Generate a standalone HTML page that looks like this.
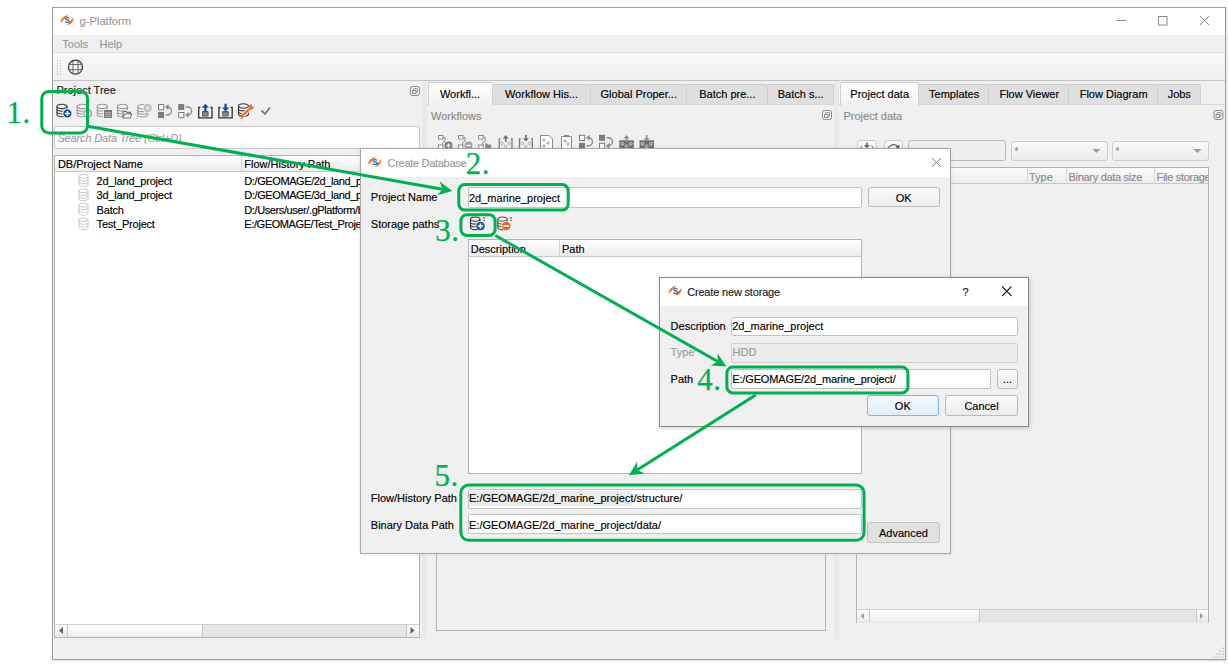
<!DOCTYPE html><html><head><meta charset='utf-8'><style>
*{margin:0;padding:0;box-sizing:border-box}
html,body{width:1228px;height:664px;overflow:hidden;background:#fff;font-family:'Liberation Sans',sans-serif}
.a{position:absolute}
.t{white-space:nowrap;-webkit-text-stroke:0.15px currentColor}
svg{position:absolute;overflow:visible}
</style></head><body>
<div class="a" style="left:52px;top:7px;width:1174px;height:653px;border:1px solid #9d9d9d;background:#f0f0f0;box-shadow:1px 1px 2px rgba(0,0,0,0.15)"></div>
<div class="a" style="left:53px;top:8px;width:1172px;height:27px;background:#fff"></div>
<div class="a" style="left:53px;top:35px;width:1172px;height:17px;background:#f0f0f0"></div>
<div class="a" style="left:53px;top:52px;width:1172px;height:1px;background:#dcdcdc"></div>
<div class="a" style="left:53px;top:53px;width:1172px;height:27px;background:linear-gradient(#f9f9f9,#f0f0f0)"></div>
<div class="a" style="left:53px;top:80px;width:1172px;height:1px;background:#c4c4c4"></div>
<div class="a t" style="left:79.5px;top:15.32px;font-size:11.2px;line-height:13px;color:#999;">g-Platform</div>
<div class="a t" style="left:62.3px;top:37.79px;font-size:11px;line-height:13px;color:#999;">Tools</div>
<div class="a t" style="left:99.5px;top:37.79px;font-size:11px;line-height:13px;color:#999;">Help</div>
<div class="a t" style="left:56.5px;top:84.49px;font-size:11px;line-height:13px;color:#1a1a1a;">Project Tree</div>
<div class="a" style="left:54px;top:126px;width:366px;height:23px;background:#fff;border:1px solid #c9c9c9;border-radius:3px"></div>
<div class="a t" style="left:57.4px;top:131.89px;font-size:11px;line-height:13px;color:#9c9c9c;letter-spacing:-0.15px;font-style:italic">Search Data Tree (Ctrl+D)</div>
<div class="a" style="left:54px;top:155px;width:366px;height:483px;background:#fff;border:1px solid #b4b4b4"></div>
<div class="a" style="left:55px;top:156px;width:364px;height:16px;background:linear-gradient(#ffffff,#ececec);border-bottom:1px solid #c8c8c8"></div>
<div class="a" style="left:241px;top:156px;width:1px;height:16px;background:#d5d5d5"></div>
<div class="a t" style="left:57.9px;top:158.19px;font-size:11px;line-height:13px;color:#000;">DB/Project Name</div>
<div class="a t" style="left:244.3px;top:158.19px;font-size:11px;line-height:13px;color:#000;">Flow/History Path</div>
<div class="a t" style="left:96.6px;top:175.09px;font-size:11px;line-height:13px;color:#000;letter-spacing:-0.2px;">2d_land_project</div>
<div class="a t" style="left:244.3px;top:175.09px;font-size:11px;line-height:13px;color:#000;letter-spacing:-0.4px;">D:/GEOMAGE/2d_land_project</div>
<div class="a t" style="left:96.6px;top:189.49px;font-size:11px;line-height:13px;color:#000;letter-spacing:-0.2px;">3d_land_project</div>
<div class="a t" style="left:244.3px;top:189.49px;font-size:11px;line-height:13px;color:#000;letter-spacing:-0.4px;">D:/GEOMAGE/3d_land_project</div>
<div class="a t" style="left:96.6px;top:203.89px;font-size:11px;line-height:13px;color:#000;letter-spacing:-0.2px;">Batch</div>
<div class="a t" style="left:244.3px;top:203.89px;font-size:11px;line-height:13px;color:#000;letter-spacing:-0.4px;">D:/Users/user/.gPlatform/batch</div>
<div class="a t" style="left:96.6px;top:218.29px;font-size:11px;line-height:13px;color:#000;letter-spacing:-0.2px;">Test_Project</div>
<div class="a t" style="left:244.3px;top:218.29px;font-size:11px;line-height:13px;color:#000;letter-spacing:-0.4px;">E:/GEOMAGE/Test_Project</div>
<div class="a" style="left:55px;top:624px;width:364px;height:13px;background:#e6e6e6;border-top:1px solid #d0d0d0"></div>
<div class="a" style="left:55px;top:625px;width:13px;height:12px;background:linear-gradient(#fdfdfd,#eaeaea);border-right:1px solid #c8c8c8"></div>
<div class="a" style="left:68px;top:625px;width:135px;height:12px;background:linear-gradient(#ffffff,#ececec);border-right:1px solid #c8c8c8"></div>
<div class="a" style="left:406px;top:625px;width:13px;height:12px;background:linear-gradient(#fdfdfd,#eaeaea);border-left:1px solid #c8c8c8"></div>
<div class="a" style="left:422px;top:81px;width:5px;height:558px;background:#e9e9e9"></div>
<div class="a" style="left:834px;top:81px;width:5px;height:558px;background:#e9e9e9"></div>
<div class="a" style="left:427px;top:104px;width:407px;height:1px;background:#d9d9d9"></div>
<div class="a" style="left:427.5px;top:82px;width:65.0px;height:23.5px;background:linear-gradient(#ffffff,#f0f0f0);border:1px solid #d0d0d0;border-bottom:none;border-radius:2px 2px 0 0"></div>
<div class="a t" style="left:0px;top:87.79px;font-size:11px;line-height:13px;color:#000;left:427.5px;width:65.0px;text-align:center;">Workfl...</div>
<div class="a" style="left:492.5px;top:84.3px;width:98.0px;height:20.200000000000003px;background:#dfdfdf;border:1px solid #cfcfcf;border-bottom:none;border-left:none;border-radius:0 2px 0 0"></div>
<div class="a t" style="left:0px;top:87.79px;font-size:11px;line-height:13px;color:#000;left:492.5px;width:98.0px;text-align:center;">Workflow His...</div>
<div class="a" style="left:590.5px;top:84.3px;width:96.5px;height:20.200000000000003px;background:#dfdfdf;border:1px solid #cfcfcf;border-bottom:none;border-left:none;border-radius:0 2px 0 0"></div>
<div class="a t" style="left:0px;top:87.79px;font-size:11px;line-height:13px;color:#000;left:590.5px;width:96.5px;text-align:center;">Global Proper...</div>
<div class="a" style="left:687px;top:84.3px;width:80.70000000000005px;height:20.200000000000003px;background:#dfdfdf;border:1px solid #cfcfcf;border-bottom:none;border-left:none;border-radius:0 2px 0 0"></div>
<div class="a t" style="left:0px;top:87.79px;font-size:11px;line-height:13px;color:#000;left:687px;width:80.70000000000005px;text-align:center;">Batch pre...</div>
<div class="a" style="left:767.7px;top:84.3px;width:65.89999999999998px;height:20.200000000000003px;background:#dfdfdf;border:1px solid #cfcfcf;border-bottom:none;border-left:none;border-radius:0 2px 0 0"></div>
<div class="a t" style="left:0px;top:87.79px;font-size:11px;line-height:13px;color:#000;left:767.7px;width:65.89999999999998px;text-align:center;">Batch s...</div>
<div class="a t" style="left:431px;top:109.59px;font-size:11px;line-height:13px;color:#8a8a8a;">Workflows</div>
<div class="a" style="left:436px;top:160px;width:390px;height:471px;border:1px solid #b4b4b4;background:#f0f0f0"></div>
<div class="a" style="left:839px;top:104px;width:386px;height:1px;background:#d9d9d9"></div>
<div class="a" style="left:840.4px;top:82px;width:78.60000000000002px;height:23.5px;background:linear-gradient(#ffffff,#f0f0f0);border:1px solid #d0d0d0;border-bottom:none;border-radius:2px 2px 0 0"></div>
<div class="a t" style="left:0px;top:87.79px;font-size:11px;line-height:13px;color:#000;left:840.4px;width:78.60000000000002px;text-align:center;">Project data</div>
<div class="a" style="left:919px;top:84.3px;width:70.29999999999995px;height:20.200000000000003px;background:#dfdfdf;border:1px solid #cfcfcf;border-bottom:none;border-left:none;border-radius:0 2px 0 0"></div>
<div class="a t" style="left:0px;top:87.79px;font-size:11px;line-height:13px;color:#000;left:919px;width:70.29999999999995px;text-align:center;">Templates</div>
<div class="a" style="left:989.3px;top:84.3px;width:80.0px;height:20.200000000000003px;background:#dfdfdf;border:1px solid #cfcfcf;border-bottom:none;border-left:none;border-radius:0 2px 0 0"></div>
<div class="a t" style="left:0px;top:87.79px;font-size:11px;line-height:13px;color:#000;left:989.3px;width:80.0px;text-align:center;">Flow Viewer</div>
<div class="a" style="left:1069.3px;top:84.3px;width:88.70000000000005px;height:20.200000000000003px;background:#dfdfdf;border:1px solid #cfcfcf;border-bottom:none;border-left:none;border-radius:0 2px 0 0"></div>
<div class="a t" style="left:0px;top:87.79px;font-size:11px;line-height:13px;color:#000;left:1069.3px;width:88.70000000000005px;text-align:center;">Flow Diagram</div>
<div class="a" style="left:1158px;top:84.3px;width:42.5px;height:20.200000000000003px;background:#dfdfdf;border:1px solid #cfcfcf;border-bottom:none;border-left:none;border-radius:0 2px 0 0"></div>
<div class="a t" style="left:0px;top:87.79px;font-size:11px;line-height:13px;color:#000;left:1158px;width:42.5px;text-align:center;">Jobs</div>
<div class="a t" style="left:843.5px;top:109.79px;font-size:11px;line-height:13px;color:#8a8a8a;">Project data</div>
<div class="a" style="left:857px;top:140px;width:20px;height:21px;border:1px solid #c8c8c8;border-radius:3px;background:linear-gradient(#fafafa,#ececec)"></div>
<div class="a" style="left:883.5px;top:140px;width:19.0px;height:21px;border:1px solid #c8c8c8;border-radius:3px;background:linear-gradient(#fafafa,#ececec)"></div>
<div class="a" style="left:907.5px;top:140px;width:98.0px;height:20.5px;border:1px solid #b9b9b9;border-radius:3px;background:#efefef"></div>
<div class="a" style="left:1011px;top:140.5px;width:96.5px;height:20.0px;border:1px solid #cdcdcd;border-radius:3px;background:linear-gradient(#f9f9f9,#ececec)"></div>
<div class="a t" style="left:1014.5px;top:146.03px;font-size:10px;line-height:12px;color:#8a8a8a;">*</div>
<div class="a" style="left:1112px;top:140.5px;width:96.5px;height:20.0px;border:1px solid #cdcdcd;border-radius:3px;background:linear-gradient(#f9f9f9,#ececec)"></div>
<div class="a t" style="left:1115.5px;top:146.03px;font-size:10px;line-height:12px;color:#8a8a8a;">*</div>
<div class="a" style="left:856px;top:167px;width:353px;height:456px;border:1px solid #b4b4b4;background:#f0f0f0"></div>
<div class="a" style="left:857px;top:168px;width:351px;height:16px;background:linear-gradient(#fbfbfb,#ececec);border-bottom:1px solid #c8c8c8"></div>
<div class="a" style="left:1026.5px;top:168px;width:1.0px;height:16px;background:#d5d5d5"></div>
<div class="a" style="left:1065.5px;top:168px;width:1.0px;height:16px;background:#d5d5d5"></div>
<div class="a" style="left:1153.5px;top:168px;width:1.0px;height:16px;background:#d5d5d5"></div>
<div class="a t" style="left:1029px;top:170.69px;font-size:11px;line-height:13px;color:#8a8a8a;">Type</div>
<div class="a t" style="left:1068.5px;top:170.69px;font-size:11px;line-height:13px;color:#8a8a8a;letter-spacing:-0.3px;">Binary data size</div>
<div class="a t" style="left:1156.5px;top:170.69px;font-size:11px;line-height:13px;color:#8a8a8a;width:51.5px;overflow:hidden;letter-spacing:-0.3px;">File storage</div>
<div class="a" style="left:857px;top:609px;width:351px;height:14px;background:#e6e6e6;border-top:1px solid #d0d0d0"></div>
<div class="a" style="left:857px;top:610px;width:13px;height:12px;background:linear-gradient(#fdfdfd,#eaeaea);border-right:1px solid #c8c8c8"></div>
<div class="a" style="left:870px;top:610px;width:109.5px;height:12px;background:linear-gradient(#ffffff,#ececec);border-right:1px solid #c8c8c8"></div>
<div class="a" style="left:1195.5px;top:610px;width:12.5px;height:12px;background:linear-gradient(#fdfdfd,#eaeaea);border-left:1px solid #c8c8c8"></div>
<svg class="a" style="left:0;top:0" width="1228" height="664" viewBox="0 0 1228 664"><path d="M1116.5 20.5H1126" stroke="#888" stroke-width="1"/><rect x="1158.5" y="16.5" width="8.5" height="8.5" fill="none" stroke="#888" stroke-width="1"/><path d="M1200 16L1209 25M1209 16L1200 25" stroke="#888" stroke-width="1"/><g transform="translate(60.8,15.4) scale(1.0)"><path d="M0 7.2Q0.3 1.2 7.1 0.2Q3.5 3 0 7.2Z" fill="#f26a1b" stroke="#f26a1b" stroke-width="0.5"/><path d="M12.4 2.6Q12.3 8.6 6.6 9.3Q9.6 6.2 12.4 2.6Z" fill="#f26a1b" stroke="#f26a1b" stroke-width="0.5"/><text x="3.7" y="7.9" font-family="Liberation Sans" font-weight="bold" font-size="10" fill="#1e6ab4" transform="scale(1,1.1)" style="transform-origin:0 7.9px">s</text></g><circle cx="75.5" cy="67.2" r="7" fill="none" stroke="#3a3a3a" stroke-width="1.3"/><path d="M69 64.5H82M69 69.7H82M73 60.8V73.6M78 60.8V73.6" stroke="#5a5a5a" stroke-width="0.9"/><rect x="57.0" y="60.0" width="1" height="1" fill="#b0b0b0"/><rect x="57.0" y="62.8" width="1" height="1" fill="#b0b0b0"/><rect x="57.0" y="65.6" width="1" height="1" fill="#b0b0b0"/><rect x="57.0" y="68.4" width="1" height="1" fill="#b0b0b0"/><rect x="57.0" y="71.2" width="1" height="1" fill="#b0b0b0"/><rect x="57.0" y="74.0" width="1" height="1" fill="#b0b0b0"/><rect x="60.0" y="60.0" width="1" height="1" fill="#b0b0b0"/><rect x="60.0" y="62.8" width="1" height="1" fill="#b0b0b0"/><rect x="60.0" y="65.6" width="1" height="1" fill="#b0b0b0"/><rect x="60.0" y="68.4" width="1" height="1" fill="#b0b0b0"/><rect x="60.0" y="71.2" width="1" height="1" fill="#b0b0b0"/><rect x="60.0" y="74.0" width="1" height="1" fill="#b0b0b0"/><rect x="410.5" y="86.5" width="9" height="9" rx="2" fill="none" stroke="#8c8c8c" stroke-width="1"/><rect x="413.5" y="88.5" width="4" height="4" rx="1" fill="none" stroke="#8c8c8c" stroke-width="1"/><rect x="412.5" y="90.5" width="3.5" height="3" fill="#f0f0f0" stroke="#8c8c8c" stroke-width="1"/><rect x="822.5" y="110.5" width="9" height="9" rx="2" fill="none" stroke="#8c8c8c" stroke-width="1"/><rect x="825.5" y="112.5" width="4" height="4" rx="1" fill="none" stroke="#8c8c8c" stroke-width="1"/><rect x="824.5" y="114.5" width="3.5" height="3" fill="#f0f0f0" stroke="#8c8c8c" stroke-width="1"/><rect x="1214.0" y="110.5" width="9" height="9" rx="2" fill="none" stroke="#8c8c8c" stroke-width="1"/><rect x="1217.0" y="112.5" width="4" height="4" rx="1" fill="none" stroke="#8c8c8c" stroke-width="1"/><rect x="1216.0" y="114.5" width="3.5" height="3" fill="#f0f0f0" stroke="#8c8c8c" stroke-width="1"/><g transform="translate(78.5,173.9)" fill="none" stroke="#c8c8c8" stroke-width="1"><ellipse cx="5" cy="2.5" rx="4.5" ry="2"/><path d="M0.5 2.5V10.5C0.5 11.6 2.5 12.5 5 12.5S9.5 11.6 9.5 10.5V2.5"/><path d="M0.5 5.2C0.5 6.3 2.5 7.2 5 7.2S9.5 6.3 9.5 5.2M0.5 7.9C0.5 9 2.5 9.9 5 9.9S9.5 9 9.5 7.9"/></g><g transform="translate(78.5,188.3)" fill="none" stroke="#c8c8c8" stroke-width="1"><ellipse cx="5" cy="2.5" rx="4.5" ry="2"/><path d="M0.5 2.5V10.5C0.5 11.6 2.5 12.5 5 12.5S9.5 11.6 9.5 10.5V2.5"/><path d="M0.5 5.2C0.5 6.3 2.5 7.2 5 7.2S9.5 6.3 9.5 5.2M0.5 7.9C0.5 9 2.5 9.9 5 9.9S9.5 9 9.5 7.9"/></g><g transform="translate(78.5,202.70000000000002)" fill="none" stroke="#c8c8c8" stroke-width="1"><ellipse cx="5" cy="2.5" rx="4.5" ry="2"/><path d="M0.5 2.5V10.5C0.5 11.6 2.5 12.5 5 12.5S9.5 11.6 9.5 10.5V2.5"/><path d="M0.5 5.2C0.5 6.3 2.5 7.2 5 7.2S9.5 6.3 9.5 5.2M0.5 7.9C0.5 9 2.5 9.9 5 9.9S9.5 9 9.5 7.9"/></g><g transform="translate(78.5,217.10000000000002)" fill="none" stroke="#c8c8c8" stroke-width="1"><ellipse cx="5" cy="2.5" rx="4.5" ry="2"/><path d="M0.5 2.5V10.5C0.5 11.6 2.5 12.5 5 12.5S9.5 11.6 9.5 10.5V2.5"/><path d="M0.5 5.2C0.5 6.3 2.5 7.2 5 7.2S9.5 6.3 9.5 5.2M0.5 7.9C0.5 9 2.5 9.9 5 9.9S9.5 9 9.5 7.9"/></g><path d="M59 630.5L63 627V634Z" fill="#606060"/><path d="M414.5 630.5L410.5 627V634Z" fill="#606060"/><path d="M1092.5 149H1100.5L1096.5 153Z" fill="#9a9a9a"/><path d="M1193.5 149H1201.5L1197.5 153Z" fill="#9a9a9a"/><path d="M860.5 616L864 613V619Z" fill="#a0a0a0"/><path d="M1203.5 616L1200 613V619Z" fill="#a0a0a0"/><rect x="1222.5" y="647.5" width="1.5" height="1.5" fill="#c4c4c4"/><rect x="1219.5" y="650.5" width="1.5" height="1.5" fill="#c4c4c4"/><rect x="1222.5" y="650.5" width="1.5" height="1.5" fill="#c4c4c4"/><rect x="1216.5" y="653.5" width="1.5" height="1.5" fill="#c4c4c4"/><rect x="1219.5" y="653.5" width="1.5" height="1.5" fill="#c4c4c4"/><rect x="1222.5" y="653.5" width="1.5" height="1.5" fill="#c4c4c4"/><rect x="1213.5" y="656.5" width="1.5" height="1.5" fill="#c4c4c4"/><rect x="1216.5" y="656.5" width="1.5" height="1.5" fill="#c4c4c4"/><rect x="1219.5" y="656.5" width="1.5" height="1.5" fill="#c4c4c4"/><rect x="1222.5" y="656.5" width="1.5" height="1.5" fill="#c4c4c4"/><g transform="translate(56.5,103.7)" fill="none" stroke="#3a3a3a" stroke-width="1.1"><ellipse cx="5.5" cy="2.7" rx="5" ry="2.2"/><path d="M0.5 2.7V10.8C0.5 12.0 2.7 13.0 5.5 13.0S10.5 12.0 10.5 10.8V2.7"/><path d="M0.5 5.40C0.5 6.60 2.7 7.60 5.5 7.60S10.5 6.60 10.5 5.40"/><path d="M0.5 8.10C0.5 9.30 2.7 10.30 5.5 10.30S10.5 9.30 10.5 8.10"/></g><circle cx="67.4" cy="113.5" r="5" fill="#f0f0f0"/><circle cx="67.4" cy="113.5" r="4.4" fill="#0d4aa0" stroke="#fff" stroke-width="0.6"/><path d="M64.80000000000001 113.5H70.0M67.4 110.9V116.1" stroke="#fff" stroke-width="1.6"/><g transform="translate(76.7,103.7)" fill="none" stroke="#9a9a9a" stroke-width="1.1"><ellipse cx="5.5" cy="2.7" rx="5" ry="2.2"/><path d="M0.5 2.7V10.8C0.5 12.0 2.7 13.0 5.5 13.0S10.5 12.0 10.5 10.8V2.7"/><path d="M0.5 5.40C0.5 6.60 2.7 7.60 5.5 7.60S10.5 6.60 10.5 5.40"/><path d="M0.5 8.10C0.5 9.30 2.7 10.30 5.5 10.30S10.5 9.30 10.5 8.10"/></g><circle cx="87.7" cy="113.5" r="5" fill="#f0f0f0"/><circle cx="87.7" cy="113.5" r="3.8" fill="none" stroke="#a0a0a0" stroke-width="1.4"/><g transform="translate(96.8,103.7)" fill="none" stroke="#9a9a9a" stroke-width="1.1"><ellipse cx="5.5" cy="2.7" rx="5" ry="2.2"/><path d="M0.5 2.7V10.8C0.5 12.0 2.7 13.0 5.5 13.0S10.5 12.0 10.5 10.8V2.7"/><path d="M0.5 5.40C0.5 6.60 2.7 7.60 5.5 7.60S10.5 6.60 10.5 5.40"/><path d="M0.5 8.10C0.5 9.30 2.7 10.30 5.5 10.30S10.5 9.30 10.5 8.10"/></g><rect x="103" y="109" width="10" height="10" fill="#f0f0f0"/><rect x="104" y="110" width="8" height="8" fill="#7a7a7a"/><path d="M105 112.5H111M105 114.5H111M105 116.5H111" stroke="#c8c8c8" stroke-width="0.7"/><g transform="translate(117,103.7)" fill="none" stroke="#9a9a9a" stroke-width="1.1"><ellipse cx="5.5" cy="2.7" rx="5" ry="2.2"/><path d="M0.5 2.7V10.8C0.5 12.0 2.7 13.0 5.5 13.0S10.5 12.0 10.5 10.8V2.7"/><path d="M0.5 5.40C0.5 6.60 2.7 7.60 5.5 7.60S10.5 6.60 10.5 5.40"/><path d="M0.5 8.10C0.5 9.30 2.7 10.30 5.5 10.30S10.5 9.30 10.5 8.10"/></g><rect x="122" y="110" width="11" height="9" fill="#f0f0f0"/><path d="M123 118V111.3H126L127 112.3H130.5V114" fill="none" stroke="#6a6a6a" stroke-width="1.2"/><path d="M123 118L124.6 114H131.8L130.4 118Z" fill="#fff" stroke="#6a6a6a" stroke-width="1"/><g transform="translate(137.2,104)" fill="none" stroke="#a0a0a0" stroke-width="1.1"><ellipse cx="5.5" cy="2.7" rx="5" ry="2.2"/><path d="M0.5 2.7V10.8C0.5 12.0 2.7 13.0 5.5 13.0S10.5 12.0 10.5 10.8V2.7"/><path d="M0.5 5.40C0.5 6.60 2.7 7.60 5.5 7.60S10.5 6.60 10.5 5.40"/><path d="M0.5 8.10C0.5 9.30 2.7 10.30 5.5 10.30S10.5 9.30 10.5 8.10"/></g><circle cx="147.7" cy="108" r="5" fill="#f0f0f0"/><circle cx="147.7" cy="108" r="4.2" fill="#bdbdbd"/><path d="M146 106.3L149.4 109.7M149.4 106.3L146 109.7" stroke="#f0f0f0" stroke-width="1.1"/><rect x="158.5" y="104.5" width="5.2" height="5.2" fill="#fff" stroke="#7c7c7c" stroke-width="1"/><rect x="158" y="112" width="6" height="6" fill="#7c7c7c"/><path d="M165.5 115H167.5A4 4 0 0 0 167.5 107H167" fill="none" stroke="#8a8a8a" stroke-width="1.4"/><path d="M165 107L168.5 104V110Z" fill="#8a8a8a"/><rect x="178.2" y="104" width="6" height="6" fill="#7c7c7c"/><rect x="178.7" y="112.5" width="5.2" height="5.2" fill="#fff" stroke="#7c7c7c" stroke-width="1"/><path d="M185.7 107H187.7A4 4 0 0 1 187.7 115H187.2" fill="none" stroke="#8a8a8a" stroke-width="1.4"/><path d="M185.2 115L188.7 112V118Z" fill="#8a8a8a"/><path d="M200.3 107.5H198.7V117.8H212V107.5H210.4" fill="none" stroke="#2e2e2e" stroke-width="1.3"/><rect x="202" y="111.0" width="6.6" height="5.6" rx="1.2" fill="#5a5a5a"/><path d="M203 113.1H207.6M203 114.8H207.6" stroke="#c8c8c8" stroke-width="0.7"/><path d="M205.35 111.5V106.3" stroke="#0d4aa0" stroke-width="2.2"/><path d="M201.8 107.7L205.35 103.7L208.9 107.7Z" fill="#0d4aa0"/><path d="M220.5 107.5H218.89999999999998V117.8H232.2V107.5H230.6" fill="none" stroke="#2e2e2e" stroke-width="1.3"/><rect x="222.2" y="111.0" width="6.6" height="5.6" rx="1.2" fill="#5a5a5a"/><path d="M223.2 113.1H227.79999999999998M223.2 114.8H227.79999999999998" stroke="#c8c8c8" stroke-width="0.7"/><path d="M225.54999999999998 103.7V108.5" stroke="#0d4aa0" stroke-width="2.2"/><path d="M222.0 107.5L225.54999999999998 111.5L229.1 107.5Z" fill="#0d4aa0"/><g transform="translate(238,103.3)" fill="none" stroke="#3a3a3a" stroke-width="1.1"><ellipse cx="5.5" cy="2.7" rx="5" ry="2.2"/><path d="M0.5 2.7V10.8C0.5 12.0 2.7 13.0 5.5 13.0S10.5 12.0 10.5 10.8V2.7"/><path d="M0.5 5.40C0.5 6.60 2.7 7.60 5.5 7.60S10.5 6.60 10.5 5.40"/><path d="M0.5 8.10C0.5 9.30 2.7 10.30 5.5 10.30S10.5 9.30 10.5 8.10"/></g><path d="M242 116.2L251 107.5" stroke="#f0f0f0" stroke-width="4"/><path d="M242 116.2L251 107.5" stroke="#ec6a1a" stroke-width="2.2"/><circle cx="251.5" cy="107" r="2.4" fill="#ec6a1a"/><circle cx="252.8" cy="105.7" r="1" fill="#f0f0f0"/><circle cx="241.5" cy="116.7" r="2" fill="#ec6a1a"/><circle cx="240.5" cy="117.6" r="0.8" fill="#f0f0f0"/><path d="M261.5 110.5L265 114L270 107.5" fill="none" stroke="#787878" stroke-width="1.8"/><rect x="438.5" y="135.5" width="4.5" height="3.5" fill="#fff" stroke="#8a8a8a" stroke-width="1"/><path d="M443 137.3H445V141L442.5 143V145" fill="none" stroke="#8a8a8a" stroke-width="1"/><rect x="438.5" y="145" width="4.5" height="3.5" fill="#fff" stroke="#8a8a8a" stroke-width="1"/><circle cx="448.5" cy="145.5" r="4" fill="#7a7a7a"/><path d="M446.5 145.5H450.5M448.5 143.5V147.5" stroke="#fff" stroke-width="1.3"/><rect x="458.5" y="135.5" width="4.5" height="3.5" fill="#fff" stroke="#8a8a8a" stroke-width="1"/><path d="M463 137.3H465V141L462.5 143V145" fill="none" stroke="#8a8a8a" stroke-width="1"/><rect x="458.5" y="145" width="4.5" height="3.5" fill="#fff" stroke="#8a8a8a" stroke-width="1"/><circle cx="468.5" cy="145.5" r="4" fill="#a0a0a0"/><path d="M466.3 145.5H470.7" stroke="#fff" stroke-width="1.3"/><rect x="478.7" y="135.5" width="4.5" height="3.5" fill="#fff" stroke="#8a8a8a" stroke-width="1"/><path d="M483.2 137.3H485.2V141L482.7 143V145" fill="none" stroke="#8a8a8a" stroke-width="1"/><rect x="478.7" y="145" width="4.5" height="3.5" fill="#fff" stroke="#8a8a8a" stroke-width="1"/><path d="M485.2 149V143.5H487.2L488.2 144.5H491.2V149Z" fill="#8a8a8a"/><path d="M500.5 138.8H499.2V149.8H512.0V138.8H510.7" fill="none" stroke="#7a7a7a" stroke-width="1.3"/><circle cx="502.0" cy="143.3" r="1.3" fill="none" stroke="#a8a8a8" stroke-width="0.9"/><circle cx="505.5" cy="146.3" r="1.3" fill="none" stroke="#a8a8a8" stroke-width="0.9"/><circle cx="509.3" cy="143.3" r="1.3" fill="none" stroke="#a8a8a8" stroke-width="0.9"/><path d="M505.7 141.8V137.3" stroke="#6e6e6e" stroke-width="1.7"/><path d="M502.7 138.4L505.7 135.0L508.7 138.4Z" fill="#6e6e6e"/><path d="M520.8 138.8H519.5V149.8H532.3V138.8H531.0" fill="none" stroke="#7a7a7a" stroke-width="1.3"/><circle cx="522.3" cy="143.3" r="1.3" fill="none" stroke="#a8a8a8" stroke-width="0.9"/><circle cx="525.8" cy="146.3" r="1.3" fill="none" stroke="#a8a8a8" stroke-width="0.9"/><circle cx="529.5999999999999" cy="143.3" r="1.3" fill="none" stroke="#a8a8a8" stroke-width="0.9"/><path d="M526.0 135.0V138.8" stroke="#6e6e6e" stroke-width="1.7"/><path d="M523.0 138.3L526.0 141.60000000000002L529.0 138.3Z" fill="#6e6e6e"/><path d="M540.5 135.5H549L552.5 139V150H540.5Z" fill="#fff" stroke="#8a8a8a" stroke-width="1"/><circle cx="544" cy="140" r="1.2" fill="none" stroke="#8a8a8a" stroke-width="0.8"/><circle cx="548" cy="143" r="1.2" fill="none" stroke="#8a8a8a" stroke-width="0.8"/><circle cx="544" cy="146" r="1.2" fill="none" stroke="#8a8a8a" stroke-width="0.8"/><path d="M561.5 136.5H571.5V150H561.5Z" fill="#fff" stroke="#8a8a8a" stroke-width="1"/><rect x="564" y="135" width="5" height="2.2" fill="#8a8a8a"/><circle cx="565" cy="141" r="1.2" fill="none" stroke="#8a8a8a" stroke-width="0.8"/><circle cx="568" cy="144" r="1.2" fill="none" stroke="#8a8a8a" stroke-width="0.8"/><rect x="579.5" y="135.3" width="5.2" height="5.2" fill="#fff" stroke="#7c7c7c" stroke-width="1"/><rect x="579" y="142.8" width="6" height="6" fill="#7c7c7c"/><path d="M586.5 145.8H588.5A4 4 0 0 0 588.5 137.8H588" fill="none" stroke="#8a8a8a" stroke-width="1.4"/><path d="M586 137.8L589.5 134.8V140.8Z" fill="#8a8a8a"/><rect x="599" y="134.8" width="6" height="6" fill="#7c7c7c"/><rect x="599.5" y="143.3" width="5.2" height="5.2" fill="#fff" stroke="#7c7c7c" stroke-width="1"/><path d="M606.5 137.8H608.5A4 4 0 0 1 608.5 145.8H608" fill="none" stroke="#8a8a8a" stroke-width="1.4"/><path d="M606 145.8L609.5 142.8V148.8Z" fill="#8a8a8a"/><rect x="619.3" y="140.3" width="14.5" height="9" fill="#707070"/><circle cx="622.3" cy="143.8" r="1.4" fill="none" stroke="#d8d8d8" stroke-width="0.9"/><circle cx="626.5" cy="146.3" r="1.4" fill="none" stroke="#d8d8d8" stroke-width="0.9"/><circle cx="630.8" cy="143.8" r="1.4" fill="none" stroke="#d8d8d8" stroke-width="0.9"/><path d="M626.5 141.8V137.3" stroke="#8c8c8c" stroke-width="1.7"/><path d="M623.5 138.4L626.5 135.0L629.5 138.4Z" fill="#8c8c8c"/><rect x="639.5" y="140.3" width="14.5" height="9" fill="#707070"/><circle cx="642.5" cy="143.8" r="1.4" fill="none" stroke="#d8d8d8" stroke-width="0.9"/><circle cx="646.7" cy="146.3" r="1.4" fill="none" stroke="#d8d8d8" stroke-width="0.9"/><circle cx="651.0" cy="143.8" r="1.4" fill="none" stroke="#d8d8d8" stroke-width="0.9"/><path d="M646.7 135.0V138.8" stroke="#8c8c8c" stroke-width="1.7"/><path d="M643.7 138.3L646.7 141.60000000000002L649.7 138.3Z" fill="#8c8c8c"/><path d="M866.8 142.5V147" stroke="#6a6a6a" stroke-width="1.7"/><path d="M863.8 145L866.8 148.5L869.8 145Z" fill="#6a6a6a"/><path d="M862 145.5L860.5 148.5M871.5 145.5L873.5 148.5" stroke="#8a8a8a" stroke-width="1.1"/><path d="M887.5 148.5Q893 141.5 898.5 147" fill="none" stroke="#5a5a5a" stroke-width="1.2"/><path d="M895.5 147.3L899.5 144.8L899.3 149Z" fill="#5a5a5a"/></svg>
<div class="a" style="left:360px;top:148px;width:591px;height:406px;border:1px solid #a8a8a8;background:#f0f0f0;box-shadow:0 0 3px rgba(0,0,0,0.12)"></div>
<div class="a" style="left:361px;top:149px;width:589px;height:28px;background:#fff"></div>
<div class="a t" style="left:387.6px;top:157.39px;font-size:11px;line-height:13px;color:#999;letter-spacing:-0.3px;">Create Database</div>
<div class="a t" style="left:370.8px;top:191.39px;font-size:11px;line-height:13px;color:#000;">Project Name</div>
<div class="a" style="left:467.5px;top:187px;width:394.0px;height:21px;background:#fff;border:1px solid #c3c3c3;border-radius:2px"></div>
<div class="a t" style="left:469px;top:191.79px;font-size:11px;line-height:13px;color:#000;">2d_marine_project</div>
<div class="a" style="left:867.5px;top:187.3px;width:72.5px;height:20.19999999999999px;background:linear-gradient(#fbfbfb,#ececec);border:1px solid #bababa;border-radius:3px"></div>
<div class="a t" style="left:0px;top:191.59px;font-size:11px;line-height:13px;color:#000;left:867.5px;width:72.5px;text-align:center;">OK</div>
<div class="a t" style="left:370.8px;top:217.89px;font-size:11px;line-height:13px;color:#000;">Storage paths</div>
<div class="a" style="left:467.5px;top:239px;width:394.5px;height:235px;background:#fff;border:1px solid #b4b4b4"></div>
<div class="a" style="left:468.5px;top:240px;width:392.5px;height:16.5px;background:linear-gradient(#ffffff,#ececec);border-bottom:1px solid #c8c8c8"></div>
<div class="a" style="left:559px;top:240px;width:1px;height:16px;background:#d5d5d5"></div>
<div class="a t" style="left:470.8px;top:242.59px;font-size:11px;line-height:13px;color:#000;">Description</div>
<div class="a t" style="left:562px;top:242.59px;font-size:11px;line-height:13px;color:#000;">Path</div>
<div class="a t" style="left:370.8px;top:492.29px;font-size:11px;line-height:13px;color:#000;">Flow/History Path</div>
<div class="a" style="left:467.5px;top:488.5px;width:394.0px;height:20.0px;background:#fff;border:1px solid #c3c3c3;border-radius:2px"></div>
<div class="a" style="left:469px;top:491px;width:163px;height:15px;background:#ebebeb"></div>
<div class="a t" style="left:469px;top:492.49px;font-size:11px;line-height:13px;color:#000;">E:/GEOMAGE/2d_marine_project/structure/</div>
<div class="a t" style="left:370.8px;top:518.69px;font-size:11px;line-height:13px;color:#000;">Binary Data Path</div>
<div class="a" style="left:467.5px;top:514.3px;width:394.0px;height:20.0px;background:#fff;border:1px solid #c3c3c3;border-radius:2px"></div>
<div class="a t" style="left:469px;top:518.89px;font-size:11px;line-height:13px;color:#000;">E:/GEOMAGE/2d_marine_project/data/</div>
<div class="a" style="left:867.2px;top:522.2px;width:72.59999999999991px;height:20.59999999999991px;background:#e1e1e1;border:1px solid #c2c2c2;border-radius:3px"></div>
<div class="a t" style="left:0px;top:526.69px;font-size:11px;line-height:13px;color:#000;left:867.2px;width:72.59999999999991px;text-align:center;">Advanced</div>
<svg class="a" style="left:0;top:0" width="1228" height="664" viewBox="0 0 1228 664"><g transform="translate(368.5,157.2) scale(1.0)"><path d="M0 7.2Q0.3 1.2 7.1 0.2Q3.5 3 0 7.2Z" fill="#f26a1b" stroke="#f26a1b" stroke-width="0.5"/><path d="M12.4 2.6Q12.3 8.6 6.6 9.3Q9.6 6.2 12.4 2.6Z" fill="#f26a1b" stroke="#f26a1b" stroke-width="0.5"/><text x="3.7" y="7.9" font-family="Liberation Sans" font-weight="bold" font-size="10" fill="#1e6ab4" transform="scale(1,1.1)" style="transform-origin:0 7.9px">s</text></g><path d="M932 158L941 167M941 158L932 167" stroke="#888" stroke-width="1"/><g transform="translate(470,216.5)" fill="none" stroke="#3c3c3c" stroke-width="1.1"><ellipse cx="5.2" cy="2.6" rx="4.7" ry="2.1"/><path d="M0.5 2.6V11C0.5 12.2 2.6 13.1 5.2 13.1S9.9 12.2 9.9 11V2.6"/><path d="M0.5 5.4C0.5 6.6 2.6 7.5 5.2 7.5S9.9 6.6 9.9 5.4M0.5 8.2C0.5 9.4 2.6 10.3 5.2 10.3S9.9 9.4 9.9 8.2"/></g><path d="M482.5 218H485M483.5 220.5H485" stroke="#444" stroke-width="1"/><circle cx="480.5" cy="226" r="4.6" fill="#1a4fa0" stroke="#fff" stroke-width="0.6"/><path d="M477.9 226H483.1M480.5 223.4V228.6" stroke="#fff" stroke-width="1.6"/><g transform="translate(497.3,216.5)" fill="none" stroke="#555" stroke-width="1.1"><ellipse cx="5.2" cy="2.6" rx="4.7" ry="2.1"/><path d="M0.5 2.6V11C0.5 12.2 2.6 13.1 5.2 13.1S9.9 12.2 9.9 11V2.6"/><path d="M0.5 5.4C0.5 6.6 2.6 7.5 5.2 7.5S9.9 6.6 9.9 5.4M0.5 8.2C0.5 9.4 2.6 10.3 5.2 10.3S9.9 9.4 9.9 8.2"/></g><path d="M509.5 218H512M510.5 220.5H512" stroke="#444" stroke-width="1"/><circle cx="506.2" cy="226" r="4.6" fill="#e8661c" stroke="#fff" stroke-width="0.6"/><path d="M503.4 226H509.0" stroke="#fff" stroke-width="1.7"/></svg>
<div class="a" style="left:659px;top:277px;width:370px;height:150px;border:1px solid #8a8a8a;background:#f0f0f0;box-shadow:1px 1px 4px rgba(0,0,0,0.2)"></div>
<div class="a" style="left:660px;top:278px;width:368px;height:28px;background:#fff"></div>
<div class="a t" style="left:687.2px;top:285.99px;font-size:11px;line-height:13px;color:#1a1a1a;letter-spacing:-0.18px;">Create new storage</div>
<div class="a t" style="left:962.5px;top:285.79px;font-size:11px;line-height:13px;color:#1a1a1a;">?</div>
<div class="a t" style="left:670.6px;top:319.99px;font-size:11px;line-height:13px;color:#000;">Description</div>
<div class="a" style="left:731px;top:316.5px;width:286.79999999999995px;height:19.80000000000001px;background:#fff;border:1px solid #c3c3c3;border-radius:2px"></div>
<div class="a t" style="left:732.2px;top:319.99px;font-size:11px;line-height:13px;color:#000;">2d_marine_project</div>
<div class="a t" style="left:670.6px;top:346.49px;font-size:11px;line-height:13px;color:#9a9a9a;">Type</div>
<div class="a" style="left:731px;top:343px;width:286.79999999999995px;height:19.80000000000001px;background:#ececec;border:1px solid #cfcfcf;border-radius:2px"></div>
<div class="a t" style="left:732.5px;top:346.49px;font-size:11px;line-height:13px;color:#9a9a9a;">HDD</div>
<div class="a t" style="left:670.6px;top:373.49px;font-size:11px;line-height:13px;color:#000;">Path</div>
<div class="a" style="left:730.7px;top:369.3px;width:260.0999999999999px;height:20.0px;background:#fff;border:1px solid #c3c3c3;border-radius:2px"></div>
<div class="a t" style="left:732.2px;top:373.49px;font-size:11px;line-height:13px;color:#000;letter-spacing:-0.14px;">E:/GEOMAGE/2d_marine_project/</div>
<div class="a" style="left:997.3px;top:369.3px;width:20.5px;height:20.0px;background:linear-gradient(#fbfbfb,#ececec);border:1px solid #bababa;border-radius:3px"></div>
<div class="a t" style="left:0px;top:373.49px;font-size:11px;line-height:13px;color:#000;left:997.3px;width:20.5px;text-align:center;">...</div>
<div class="a" style="left:866.6px;top:395.4px;width:72.39999999999998px;height:20.600000000000023px;background:linear-gradient(#f2f8fd,#e3eef9);border:1px solid #7eb4ea;border-radius:3px"></div>
<div class="a t" style="left:0px;top:399.89px;font-size:11px;line-height:13px;color:#000;left:866.6px;width:72.39999999999998px;text-align:center;">OK</div>
<div class="a" style="left:945.3px;top:395.4px;width:72.5px;height:20.600000000000023px;background:linear-gradient(#fbfbfb,#ececec);border:1px solid #bababa;border-radius:3px"></div>
<div class="a t" style="left:0px;top:399.89px;font-size:11px;line-height:13px;color:#000;left:945.3px;width:72.5px;text-align:center;">Cancel</div>
<svg class="a" style="left:0;top:0" width="1228" height="664" viewBox="0 0 1228 664"><g transform="translate(669,286) scale(1.0)"><path d="M0 7.2Q0.3 1.2 7.1 0.2Q3.5 3 0 7.2Z" fill="#f26a1b" stroke="#f26a1b" stroke-width="0.5"/><path d="M12.4 2.6Q12.3 8.6 6.6 9.3Q9.6 6.2 12.4 2.6Z" fill="#f26a1b" stroke="#f26a1b" stroke-width="0.5"/><text x="3.7" y="7.9" font-family="Liberation Sans" font-weight="bold" font-size="10" fill="#1e6ab4" transform="scale(1,1.1)" style="transform-origin:0 7.9px">s</text></g><path d="M1002 286.5L1011.5 296M1011.5 286.5L1002 296" stroke="#222" stroke-width="1.1"/></svg>
<svg class="a" style="left:0;top:0" width="1228" height="664" viewBox="0 0 1228 664"><rect x="41.8" y="91.5" width="45.7" height="41.400000000000006" rx="7" fill="none" stroke="#00b050" stroke-width="3"/><rect x="458.8" y="184.6" width="109.40000000000003" height="25.5" rx="6" fill="none" stroke="#00b050" stroke-width="3"/><rect x="460.9" y="214.8" width="34.200000000000045" height="20.599999999999994" rx="6" fill="none" stroke="#00b050" stroke-width="3"/><rect x="726.9" y="367.0" width="181.0" height="25.899999999999977" rx="6" fill="none" stroke="#00b050" stroke-width="3"/><rect x="460.8" y="485.0" width="403.3" height="55.299999999999955" rx="8" fill="none" stroke="#00b050" stroke-width="3"/><path d="M87.50 126.30L442.45 189.16" stroke="#00b050" stroke-width="3" fill="none"/><path d="M452.30 190.90L437.29 195.35L442.45 189.16L439.74 181.57Z" fill="#00b050"/><path d="M495.40 235.50L717.70 361.47" stroke="#00b050" stroke-width="3" fill="none"/><path d="M726.40 366.40L710.77 365.59L717.70 361.47L717.67 353.41Z" fill="#00b050"/><path d="M755.70 394.90L637.45 469.85" stroke="#00b050" stroke-width="3" fill="none"/><path d="M629.00 475.20L637.08 461.79L637.45 469.85L644.57 473.62Z" fill="#00b050"/><text x="6.5" y="123.3" font-family="Liberation Serif" font-size="31" fill="#00b050" stroke="#00b050" stroke-width="0.25" letter-spacing="0.5">1.</text><text x="465.7" y="173.9" font-family="Liberation Serif" font-size="31" fill="#00b050" stroke="#00b050" stroke-width="0.25" letter-spacing="0.5">2.</text><text x="435.3" y="241.2" font-family="Liberation Serif" font-size="31" fill="#00b050" stroke="#00b050" stroke-width="0.25" letter-spacing="0.5">3.</text><text x="697.2" y="389.8" font-family="Liberation Serif" font-size="31" fill="#00b050" stroke="#00b050" stroke-width="0.25" letter-spacing="0.5">4.</text><text x="434.5" y="486.2" font-family="Liberation Serif" font-size="31" fill="#00b050" stroke="#00b050" stroke-width="0.25" letter-spacing="0.5">5.</text></svg>
</body></html>
